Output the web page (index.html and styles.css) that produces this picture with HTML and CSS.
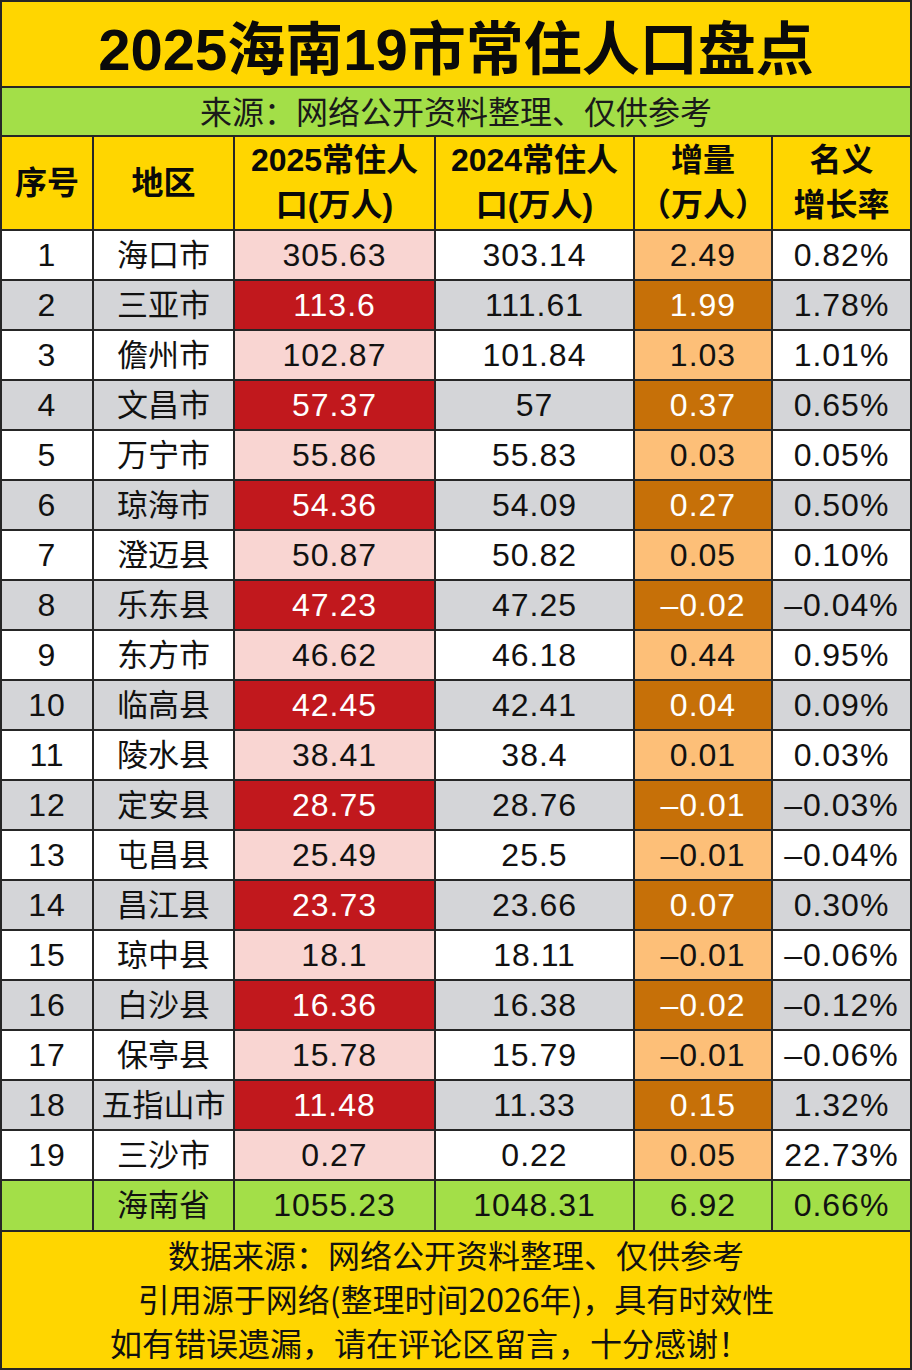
FILE: index.html
```html
<!DOCTYPE html>
<html lang="zh-CN">
<head>
<meta charset="utf-8">
<title>2025海南19市常住人口盘点</title>
<link rel="stylesheet" href="styles.css">
</head>
<body>
<div class="sheet">
  <div class="title span">2025海南19市常住人口盘点</div>
  <div class="subtitle span">来源：网络公开资料整理、仅供参考</div>

  <div class="hd">序号</div>
  <div class="hd">地区</div>
  <div class="hd">2025常住人<br>口(万人)</div>
  <div class="hd">2024常住人<br>口(万人)</div>
  <div class="hd">增量<br>（万人）</div>
  <div class="hd">名义<br>增长率</div>

  <div class="c">1</div><div class="c cn">海口市</div><div class="c pk">305.63</div><div class="c">303.14</div><div class="c lo">2.49</div><div class="c">0.82%</div>
  <div class="c g">2</div><div class="c g cn">三亚市</div><div class="c rd">113.6</div><div class="c g">111.61</div><div class="c dor">1.99</div><div class="c g">1.78%</div>
  <div class="c">3</div><div class="c cn">儋州市</div><div class="c pk">102.87</div><div class="c">101.84</div><div class="c lo">1.03</div><div class="c">1.01%</div>
  <div class="c g">4</div><div class="c g cn">文昌市</div><div class="c rd">57.37</div><div class="c g">57</div><div class="c dor">0.37</div><div class="c g">0.65%</div>
  <div class="c">5</div><div class="c cn">万宁市</div><div class="c pk">55.86</div><div class="c">55.83</div><div class="c lo">0.03</div><div class="c">0.05%</div>
  <div class="c g">6</div><div class="c g cn">琼海市</div><div class="c rd">54.36</div><div class="c g">54.09</div><div class="c dor">0.27</div><div class="c g">0.50%</div>
  <div class="c">7</div><div class="c cn">澄迈县</div><div class="c pk">50.87</div><div class="c">50.82</div><div class="c lo">0.05</div><div class="c">0.10%</div>
  <div class="c g">8</div><div class="c g cn">乐东县</div><div class="c rd">47.23</div><div class="c g">47.25</div><div class="c dor">–0.02</div><div class="c g">–0.04%</div>
  <div class="c">9</div><div class="c cn">东方市</div><div class="c pk">46.62</div><div class="c">46.18</div><div class="c lo">0.44</div><div class="c">0.95%</div>
  <div class="c g">10</div><div class="c g cn">临高县</div><div class="c rd">42.45</div><div class="c g">42.41</div><div class="c dor">0.04</div><div class="c g">0.09%</div>
  <div class="c">11</div><div class="c cn">陵水县</div><div class="c pk">38.41</div><div class="c">38.4</div><div class="c lo">0.01</div><div class="c">0.03%</div>
  <div class="c g">12</div><div class="c g cn">定安县</div><div class="c rd">28.75</div><div class="c g">28.76</div><div class="c dor">–0.01</div><div class="c g">–0.03%</div>
  <div class="c">13</div><div class="c cn">屯昌县</div><div class="c pk">25.49</div><div class="c">25.5</div><div class="c lo">–0.01</div><div class="c">–0.04%</div>
  <div class="c g">14</div><div class="c g cn">昌江县</div><div class="c rd">23.73</div><div class="c g">23.66</div><div class="c dor">0.07</div><div class="c g">0.30%</div>
  <div class="c">15</div><div class="c cn">琼中县</div><div class="c pk">18.1</div><div class="c">18.11</div><div class="c lo">–0.01</div><div class="c">–0.06%</div>
  <div class="c g">16</div><div class="c g cn">白沙县</div><div class="c rd">16.36</div><div class="c g">16.38</div><div class="c dor">–0.02</div><div class="c g">–0.12%</div>
  <div class="c">17</div><div class="c cn">保亭县</div><div class="c pk">15.78</div><div class="c">15.79</div><div class="c lo">–0.01</div><div class="c">–0.06%</div>
  <div class="c g">18</div><div class="c g cn">五指山市</div><div class="c rd">11.48</div><div class="c g">11.33</div><div class="c dor">0.15</div><div class="c g">1.32%</div>
  <div class="c">19</div><div class="c cn">三沙市</div><div class="c pk">0.27</div><div class="c">0.22</div><div class="c lo">0.05</div><div class="c">22.73%</div>

  <div class="c gr"></div><div class="c gr cn">海南省</div><div class="c gr">1055.23</div><div class="c gr">1048.31</div><div class="c gr">6.92</div><div class="c gr">0.66%</div>

  <div class="footer span">
    <p>数据来源：网络公开资料整理、仅供参考</p>
    <p>引用源于网络(整理时间2026年)，具有时效性</p>
    <p class="last">如有错误遗漏，请在评论区留言，十分感谢！</p>
  </div>
</div>
</body>
</html>
```

FILE: styles.css
```css
html, body {
  margin: 0;
  padding: 0;
  background: #262626;
}

.sheet {
  width: 912px;
  height: 1370px;
  box-sizing: border-box;
  padding: 2px;
  background: #262626;
  display: grid;
  grid-template-columns: 90px 139px 199px 197px 136px 137px;
  grid-template-rows: 84px 47px 92px repeat(19, 48px) 49px 136px;
  gap: 2px;
  font-family: "Liberation Sans", "Noto Sans CJK SC", sans-serif;
  color: #111;
}

.span {
  grid-column: 1 / -1;
}

.title {
  background: #FFD600;
  display: flex;
  align-items: center;
  justify-content: center;
  font-size: 58px;
  font-weight: 700;
  color: #0a0a0a;
  padding-top: 2px;
}

.subtitle {
  background: #A3DF48;
  display: flex;
  align-items: center;
  justify-content: center;
  font-family: "Noto Sans CJK SC", sans-serif;
  font-size: 32px;
  line-height: 40px;
  color: #1a1a1a;
  padding-bottom: 4px;
  box-sizing: border-box;
}

.hd {
  background: #FFD600;
  display: flex;
  align-items: center;
  justify-content: center;
  text-align: center;
  font-size: 32px;
  font-weight: 700;
  line-height: 45px;
  color: #0a0a0a;
}

.c {
  background: #ffffff;
  display: flex;
  align-items: center;
  justify-content: center;
  font-size: 32px;
  letter-spacing: 1px;
  color: #111;
  white-space: nowrap;
}

.c.cn {
  font-family: "Noto Sans CJK SC", sans-serif;
  letter-spacing: 0;
  font-size: 31px;
  line-height: 40px;
  padding-bottom: 5px;
  box-sizing: border-box;
}

.c.g { background: #D4D5D8; }
.c.pk { background: #F9D5D2; }
.c.rd { background: #C1181D; color: #ffffff; }
.c.lo { background: #FDBF78; }
.c.dor { background: #C67008; color: #ffffff; }
.c.gr { background: #A3DF48; }

.footer {
  background: #FFD600;
  display: flex;
  flex-direction: column;
  align-items: center;
  justify-content: center;
  font-family: "Noto Sans CJK SC", sans-serif;
  font-size: 32px;
  color: #111;
  padding-bottom: 5px;
  box-sizing: border-box;
}

.footer p {
  margin: 0;
  line-height: 44px;
}

.footer p.last {
  padding-right: 52px;
}
```
